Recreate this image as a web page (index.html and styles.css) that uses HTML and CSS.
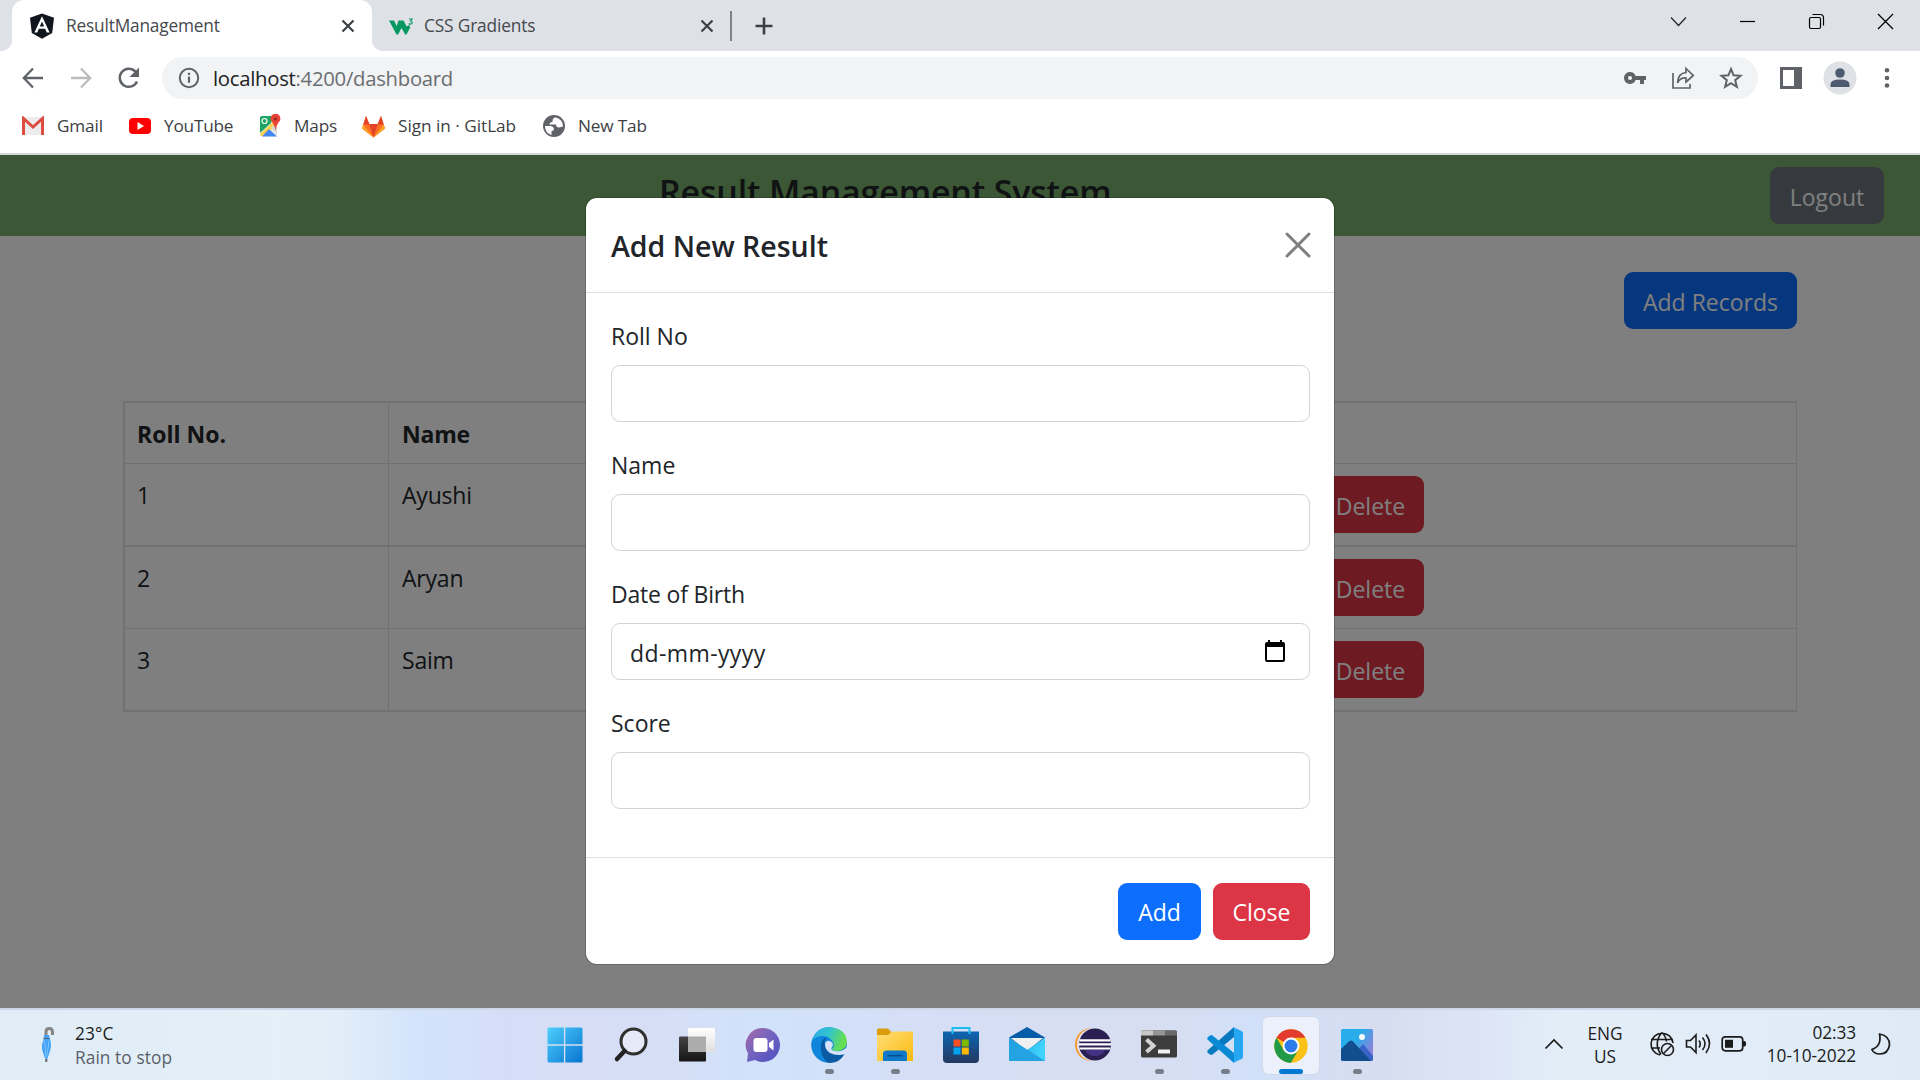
FILE: index.html
```html
<!DOCTYPE html>
<html lang="en">
<head>
<meta charset="utf-8">
<title>ResultManagement</title>
<link rel="stylesheet" href="styles.css">
</head>
<body>
<div class="screen">
  <header class="tabstrip">
    <div class="tab tab-active">
      <svg class="favicon" width="26" height="26" viewBox="0 0 26 26"><path d="M13 0.5 25 4.700 23.200 20 13 25.800 2.800 20 1 4.700Z" fill="#11151d"/><path d="M13 3.200 5.400 19.500h2.900l1.500-3.800h6.400l1.500 3.800h2.900ZM13 8.500l2.200 5h-4.400Z" fill="#fff" fill-rule="evenodd"/></svg>
      <span class="tab-title t-result">ResultManagement</span>
      <svg class="tab-x" width="16" height="16" viewBox="0 0 16 16"><path d="M2.500 2.500l11 11M13.500 2.500l-11 11" stroke="#3c4043" stroke-width="2.200"/></svg>
    </div>
    <div class="tab tab-second">
      <svg width="26" height="26" viewBox="0 0 26 26"><path d="M1 7.500h5l2.700 5.500 1.800-5.500h5l3.200 6 2.500-1.500 1 2.500-3.700 7h-1.300L13.500 15l-3.300 6.500H8.500Z" fill="#059862"/><path d="M21 6h3l-1.500 2q1.800.2 1.700 1.700-.2 1.500-1.700 1.500-1 0-1.700-.7" fill="none" stroke="#059862" stroke-width="1.200"/></svg>
      <span class="tab-title t-css">CSS Gradients</span>
      <svg class="tab-x" width="16" height="16" viewBox="0 0 16 16"><path d="M2.500 2.500l11 11M13.500 2.500l-11 11" stroke="#3c4043" stroke-width="2.200"/></svg>
    </div>
    <div class="tab-sep"></div>
    <svg class="tab-new" width="20" height="20" viewBox="0 0 20 20"><path d="M10 1.500v17M1.500 10h17" stroke="#3c4043" stroke-width="2.600"/></svg>
    <div class="window-controls">
      <svg width="17" height="17" viewBox="0 0 17 17"><path d="M1 4.500l7.500 8 7.500-8" fill="none" stroke="#222" stroke-width="1.200"/></svg>
      <svg width="17" height="17" viewBox="0 0 17 17"><path d="M1 8.500h15" stroke="#000" stroke-width="1.200"/></svg>
      <svg width="17" height="17" viewBox="0 0 17 17"><rect x="1.500" y="4.500" width="11" height="11" rx="1.500" fill="none" stroke="#000" stroke-width="1.200"/><path d="M4.500 1.500h8a3 3 0 0 1 3 3v8" fill="none" stroke="#000" stroke-width="1.200"/></svg>
      <svg width="17" height="17" viewBox="0 0 17 17"><path d="M1 1l15 15M16 1L1 16" stroke="#000" stroke-width="1.300"/></svg>
    </div>
  </header>

  <div class="toolbar">
    <svg class="nav" width="24" height="24" viewBox="0 0 24 24"><path d="M22 12H3M12 2.500L2.800 12l9.200 9.500" fill="none" stroke="#5f6368" stroke-width="2.300"/></svg>
    <svg class="nav" width="24" height="24" viewBox="0 0 24 24"><path d="M2 12h19M12 2.500l9.200 9.500-9.200 9.500" fill="none" stroke="#babcbe" stroke-width="2.300"/></svg>
    <svg class="nav" width="24" height="24" viewBox="0 0 24 24"><path d="M20 15.500A9 9 0 1 1 18.400 5.700L20.500 8" fill="none" stroke="#5f6368" stroke-width="2.500"/><path d="M22 1.500V11h-9.500Z" fill="#5f6368"/></svg>
    <div class="omnibox">
      <svg width="22" height="22" viewBox="0 0 22 22"><circle cx="11" cy="11" r="9.200" fill="none" stroke="#5f6368" stroke-width="2"/><path d="M11 9.500v6.300M11 5.700v2.300" stroke="#5f6368" stroke-width="2.200"/></svg>
      <span class="url"><b>localhost</b>:4200/dashboard</span>
      <span class="omni-icons">
        <svg width="24" height="24" viewBox="0 0 24 24"><path fill-rule="evenodd" d="M7 6a6 6 0 1 0 5.600 8H17v4h4v-4h2v-4H12.600A6 6 0 0 0 7 6Zm0 4a2 2 0 1 1 0 4 2 2 0 0 1 0-4Z" fill="#5f6368"/></svg>
        <svg width="24" height="24" viewBox="0 0 24 24"><path d="M2 7v15h17v-4" fill="none" stroke="#5f6368" stroke-width="1.700"/><path d="M15 2.500l7.300 7-7.300 6.500v-4q-6-.5-8.500 5Q7 7 15 6.500Z" fill="none" stroke="#5f6368" stroke-width="1.700"/></svg>
        <svg width="24" height="24" viewBox="0 0 24 24"><path d="M12 3l2.600 6.300 6.900.5-5.300 4.400 1.700 6.700-5.900-3.700-5.900 3.700 1.700-6.700-5.300-4.400 6.900-.5Z" fill="none" stroke="#5f6368" stroke-width="2"/></svg>
      </span>
    </div>
    <svg class="sidepanel" width="22" height="22" viewBox="0 0 22 22"><path fill-rule="evenodd" d="M0 0h22v22H0ZM3 3v16h11V3Z" fill="#5f6368"/></svg>
    <svg class="avatar" width="34" height="34" viewBox="0 0 34 34"><circle cx="17" cy="17" r="16.500" fill="#dee1e6"/><circle cx="17" cy="12" r="4.800" fill="#4d5a70"/><path d="M7.500 26v-2.500q0-5 9.500-5t9.500 5V26Z" fill="#4d5a70"/></svg>
    <svg class="dots" width="6" height="22" viewBox="0 0 6 22"><g fill="#5f6368"><circle cx="3" cy="3.300" r="2.300"/><circle cx="3" cy="11" r="2.300"/><circle cx="3" cy="18.500" r="2.300"/></g></svg>
  </div>

  <nav class="bookmarks">
    <a class="bm b1"><svg width="24" height="20" viewBox="0 0 24 20"><path d="M1 1h22v18H1Z" fill="#ececec"/><path d="M2.500 19V2.500L12 11l9.500-8.500V19" fill="none" stroke="#dc4c40" stroke-width="3"/></svg><span>Gmail</span></a>
    <a class="bm b2"><svg width="24" height="20" viewBox="0 0 24 20"><rect x="1" y="2" width="22" height="16" rx="4" fill="#f00"/><path d="M9.500 6v8l6.500-4Z" fill="#fff"/></svg><span>YouTube</span></a>
    <a class="bm b3"><svg width="24" height="24" viewBox="0 0 24 24"><path d="M2 2h17v20H2Z" fill="#eee"/><path d="M2 4q0-2 2-2h11l-2 7L2 19Z" fill="#1fa463"/><path d="M2 20L15.500 7.500 18 11 7 22H3Z" fill="#fcd34b"/><path d="M4 22.500L11 15l8 7.500Z" fill="#4285f4"/><path d="M13 13.500l6-4V21Z" fill="#d8d8d8"/><circle cx="6.500" cy="7" r="2.500" fill="none" stroke="#fff" stroke-width="1.200"/><path d="M17.500 16.500q-.5-5-3-8a4.900 4.900 0 1 1 6 0q-2.500 3-3 8Z" fill="#ea4335"/><circle cx="17.500" cy="5" r="1.600" fill="#8e2a20"/></svg><span>Maps</span></a>
    <a class="bm b4"><svg width="25" height="23" viewBox="0 0 25 23"><path d="M12.500 22.500L1 13.500 5 1l3.500 8h8L20 1l4 12.500Z" fill="#fc6d26"/><path d="M12.500 22.500L8.300 9h8.400Z" fill="#e24329"/><path d="M5 1L2.200 9.500h6.200ZM20 1l2.800 8.500h-6.200Z" fill="#e24329"/><path d="M2.200 9.500L1 13.500l11.500 9ZM22.800 9.500l1.200 4-11.500 9Z" fill="#fca326"/></svg><span>Sign in · GitLab</span></a>
    <a class="bm b5"><svg width="24" height="24" viewBox="0 0 24 24"><circle cx="12" cy="12" r="11" fill="#5f6368"/><path d="M3 12h6q3 1 3 3 0 2-2.500 2v4Q3 19 3 12ZM13 3.200Q10 5 10.500 8q-3 0-3 2.500h6.500q0 3 3 3l4-1Q21 5 13 3.200Z" fill="#fff"/></svg><span>New Tab</span></a>
  </nav>

  <main class="page">
    <div class="app-header">
      <h1>Result Management System</h1>
      <button class="btn btn-logout">Logout</button>
    </div>
    <div class="actions"><button class="btn btn-primary btn-records">Add Records</button></div>
    <table class="results">
      <colgroup><col class="c-roll"><col class="c-name"><col class="c-act"></colgroup>
      <tr class="r-head"><th>Roll No.</th><th>Name</th><th></th></tr>
      <tr class="r-thick"><td>1</td><td>Ayushi</td><td><button class="btn btn-danger btn-del">Delete</button></td></tr>
      <tr class="r-thin"><td>2</td><td>Aryan</td><td><button class="btn btn-danger btn-del">Delete</button></td></tr>
      <tr class="r-thick"><td>3</td><td>Saim</td><td><button class="btn btn-danger btn-del">Delete</button></td></tr>
    </table>
    <div class="backdrop"></div>
    <section class="modal">
      <div class="modal-header">
        <h2>Add New Result</h2>
        <svg width="26" height="26" viewBox="0 0 26 26"><path d="M2 2l22 22M24 2L2 24" stroke="#7f7f7f" stroke-width="3" stroke-linecap="round"/></svg>
      </div>
      <form class="modal-body">
        <div class="field"><label>Roll No</label><div class="control"></div></div>
        <div class="field"><label>Name</label><div class="control"></div></div>
        <div class="field"><label class="l-dob">Date of Birth</label><div class="control"><span class="date-hint">dd-mm-yyyy</span><svg width="24" height="24" viewBox="0 0 24 24"><path fill-rule="evenodd" d="M5 1h2v2h10V1h2v2h1q2 0 2 2v16q0 2-2 2H4q-2 0-2-2V5q0-2 2-2h1ZM4 8v13h16V8Z" fill="#000"/></svg></div></div>
        <div class="field"><label>Score</label><div class="control"></div></div>
      </form>
      <div class="modal-footer">
        <button class="btn btn-primary btn-add">Add</button>
        <button class="btn btn-danger btn-close">Close</button>
      </div>
    </section>
  </main>

  <footer class="taskbar">
    <div class="weather">
      <svg width="18" height="36" viewBox="0 0 18 36"><path d="M7 12V5q0-3.500 3.200-3.500T13.500 5v3" fill="none" stroke="#858585" stroke-width="3"/><path d="M5 8h5l1 4q2 6 0 12l-3 9H6.500l-3-9q-1.500-6 1-11Z" fill="#46a4f8"/><path d="M5 13q2 8 2 19M10 14q-1 9-2.500 15" fill="none" stroke="#7cc3ff"/><path d="M4.500 11.500h6" stroke="#596675"/><path d="M7.300 32v3" stroke="#666" stroke-width="2"/></svg>
      <div><p class="temp">23°C</p><p class="rain">Rain to stop</p></div>
    </div>
    <div class="apps">
      <div class="app"><svg width="36" height="36" viewBox="0 0 36 36"><defs><linearGradient id="win" gradientUnits="userSpaceOnUse" x1="0" y1="0" x2="36" y2="36"><stop offset="0" stop-color="#50d0fc"/><stop offset="1" stop-color="#0573d0"/></linearGradient></defs><path d="M2 .5h14.900v16.800H.5V2Q.5.500 2 .5ZM18.300.500H34q1.500 0 1.500 1.500v15.300H18.300ZM.5 18.700h16.400v16.800H2Q.5 35.500.5 34ZM18.300 18.700h17.200V34q0 1.500-1.500 1.500H18.300Z" fill="url(#win)"/></svg></div>
      <div class="app"><svg width="36" height="36" viewBox="0 0 36 36"><circle cx="20.500" cy="14.500" r="12.500" fill="#e6eaf8" stroke="#303030" stroke-width="3"/><path d="M11.500 24L4 32" stroke="#222" stroke-width="4.500" stroke-linecap="round"/></svg></div>
      <div class="app"><svg width="36" height="36" viewBox="0 0 36 36"><defs><linearGradient id="tv" x2="0" y2="1"><stop stop-color="#444"/><stop offset="1" stop-color="#151515"/></linearGradient><linearGradient id="tw" x2="0" y2="1"><stop stop-color="#fff"/><stop offset="1" stop-color="#dedede"/></linearGradient></defs><rect y="9.500" width="27" height="25" rx="1" fill="url(#tv)"/><rect x="9" y="1" width="27" height="24" rx="1" fill="url(#tw)"/><path d="M9 9.500h18V25H9Z" fill="#acacac"/></svg></div>
      <div class="app"><svg width="36" height="36" viewBox="0 0 36 36"><defs><linearGradient id="chat" x1="0" y1="0" x2="1" y2="1"><stop stop-color="#a96aa0"/><stop offset=".45" stop-color="#7565c0"/><stop offset="1" stop-color="#4a4ec0"/></linearGradient></defs><path d="M18 1a17 17 0 1 1-8 32l-8 2 1-8.500A17 17 0 0 1 18 1Z" fill="url(#chat)"/><rect x="8.500" y="11" width="14" height="14" rx="3" fill="#fff"/><path d="M24 16l4.500-3.500v11L24 20Z" fill="#fff"/></svg></div>
      <div class="app running"><svg width="36" height="36" viewBox="0 0 36 36"><defs><linearGradient id="eg" x2="1" y2=".3"><stop stop-color="#2ba9e8"/><stop offset=".5" stop-color="#31c4d0"/><stop offset="1" stop-color="#66df4e"/></linearGradient></defs><circle cx="18" cy="18" r="17.800" fill="#0f86dc"/><path d="M1 14Q5 .2 18 .2q17.800 1 17.900 15.300Q35 23 27 24q-6 0-6-2 3-3 1-7-4-7-12-6-7 1-9 5Z" fill="url(#eg)"/><path d="M10 18q1-7 6-8-5 6 0 12 7 8 17.500 5Q28 37 17 35.700 9 30 10 18Z" fill="#0c59a4"/><path d="M14 17q1-4 5-3 5 2 1.500 7-1 3 6 3.300 5 .2 9.500-4.300l1 5-3.500 2.300Q25 29 19 26q-5-3-5-9Z" fill="#d5e2fa"/></svg></div>
      <div class="app running"><svg width="36" height="36" viewBox="0 0 36 36"><defs><linearGradient id="fd" x2="1" y2="1"><stop stop-color="#ffdf78"/><stop offset="1" stop-color="#fbb90f"/></linearGradient></defs><path d="M0 3q0-1.500 1.500-1.500H11l3.500 3.500V9H0Z" fill="#dc9b08"/><path d="M0 8h11l4-3.500h21V34H0Z" fill="url(#fd)"/><path d="M6 34V27q0-3.500 3.500-3.500h17Q30 23.500 30 27v7Z" fill="#0f78c8"/><path d="M10.500 28.700h15" stroke="#084f91" stroke-width="1.600"/></svg></div>
      <div class="app"><svg width="36" height="36" viewBox="0 0 36 36"><defs><linearGradient id="st" x2="0" y2="1"><stop stop-color="#0d65b2"/><stop offset="1" stop-color="#23395f"/></linearGradient></defs><path d="M0 4.500h36V32q0 4-4 4H4q-4 0-4-4Z" fill="url(#st)"/><path d="M9.500 7V1h17v6" fill="none" stroke="#1bbcf2" stroke-width="2"/><path d="M10.500 12.500h7v7h-7Z" fill="#f25022"/><path d="M18.800 12.500h7v7h-7Z" fill="#7fba00"/><path d="M10.500 20.500h7v7h-7Z" fill="#00a4ef"/><path d="M18.800 20.500h7v7h-7Z" fill="#ffb900"/></svg></div>
      <div class="app"><svg width="36" height="36" viewBox="0 0 36 36"><defs><linearGradient id="ml" x2="1" y2=".3"><stop stop-color="#169bdc"/><stop offset="1" stop-color="#40d4fb"/></linearGradient></defs><path d="M0 10.500L18 0l18 10.500-18 14Z" fill="#075da8"/><path d="M2 11h32L18 24Z" fill="#f0f0f0"/><path d="M0 11l18 12 18-12v23H0Z" fill="url(#ml)"/><path d="M0 11v23h36L18 22.500Z" fill="#24a3e3"/></svg></div>
      <div class="app"><svg width="36" height="36" viewBox="0 0 36 36"><circle cx="16.500" cy="17.500" r="16.500" fill="#f6972b"/><circle cx="18.500" cy="17.500" r="16.500" fill="#dfe3f2"/><circle cx="20" cy="17.500" r="16" fill="#2b1f52"/><path d="M10 23h20q-3 6-10 6t-10-6Z" fill="#443285"/><path d="M4.500 13.300h31M4 17.300h32M4.500 21.500h31" stroke="#fff" stroke-width="2.200"/></svg></div>
      <div class="app running"><svg width="36" height="36" viewBox="0 0 36 36"><rect y="3.500" width="36" height="27" rx="1.500" fill="#3c3c3c"/><path d="M0 8.500V5q0-1.500 1.500-1.500H12v5Z" fill="#c7c7c7"/><path d="M12 3.500h12v5H12Z" fill="#959595"/><path d="M24 3.500h10.500Q36 3.500 36 5v3.500H24Z" fill="#696969"/><path d="M5.500 12.500l7 6.300-7 6.300" fill="none" stroke="#d2d2d2" stroke-width="4"/><rect x="17" y="22.500" width="12" height="4" rx=".5" fill="#f1f1f1"/></svg></div>
      <div class="app running"><svg width="36" height="36" viewBox="0 0 36 36"><path d="M27 0L1 23q-1.500 1.500 0 3l2 1.500q1.200.8 2.500 0L27 10Z" fill="#0879bf"/><path d="M27 36L1 13q-1.500-1.500 0-3l2-1.500q1.200-.8 2.500 0L27 26Z" fill="#0a8ad5"/><path d="M26 0l9 4.200q1 .6 1 2v23.600q0 1.400-1 2L26 36q1-1 1-3V3q0-2-1-3Z" fill="#27a6f2"/></svg></div>
      <div class="app active"><svg width="36" height="36" viewBox="0 0 36 36"><circle cx="18" cy="18" r="16.700" fill="#fbc116"/><path d="M18 18L3.500 9.700A16.700 16.700 0 0 1 32.500 9.700H18Z" fill="#e33b2e"/><path d="M3.500 9.700A16.700 16.700 0 0 0 18 34.700L25.200 22.200 18 18 10.800 22.200Z" fill="#219a48"/><circle cx="18" cy="18" r="8.400" fill="#fff"/><circle cx="18" cy="18" r="6.500" fill="#2c7bea"/></svg></div>
      <div class="app running"><svg width="36" height="36" viewBox="0 0 36 36"><defs><linearGradient id="ph" x2="1" y2=".6"><stop offset=".5" stop-color="#29acea"/><stop offset="1" stop-color="#8b83dc"/></linearGradient></defs><rect x="2" y="2" width="32" height="32" rx="1.500" fill="url(#ph)"/><circle cx="23" cy="10" r="3" fill="#f5fbff"/><path d="M14 30l9-12q1-1 2 0l9 11v3q0 2-2 2H18Z" fill="#3a63c9"/><path d="M2 22l8.500-8q1.500-1.200 3 0L32 34H4q-2 0-2-2Z" fill="#124d8e"/></svg></div>
    </div>
    <div class="tray">
      <svg class="tray-up" width="20" height="12" viewBox="0 0 20 12"><path d="M1.500 10.500L10 2l8.500 8.500" fill="none" stroke="#1b1b1b" stroke-width="1.700"/></svg>
      <div class="lang">ENG<br>US</div>
      <svg class="tray-net" width="26" height="26" viewBox="0 0 26 26"><g fill="none" stroke="#1b1b1b" stroke-width="1.600"><path d="M24 12A11 11 0 1 0 11 24M2 8.500h21M2 17h9M13 1.500q-9 10.500-1 22M13 1.500q4 4 4.500 9"/><circle cx="18.500" cy="18.500" r="6"/><path d="M14.500 22.500l8-8"/></g></svg>
      <svg class="tray-vol" width="26" height="22" viewBox="0 0 26 22"><g fill="none" stroke="#1b1b1b" stroke-width="1.600"><path d="M1.500 7.500h4L11 2v17.500L5.500 14h-4Z"/><path d="M14 7.500q2.500 3.500 0 7M17.500 4.500q5 6 0 12.500M21 1.500q7 9 0 18.500"/></g></svg>
      <svg class="tray-bat" width="26" height="18" viewBox="0 0 26 18"><rect x="1.200" y="1.800" width="20.500" height="14" rx="3" fill="none" stroke="#1b1b1b" stroke-width="1.700"/><rect x="4" y="4.800" width="8" height="8" fill="#1b1b1b"/><path d="M22 6h1.500l1.500 1v3.500l-1.500 1H22Z" fill="#1b1b1b"/></svg>
      <div class="clock">02:33<br>10-10-2022</div>
      <svg class="tray-moon" width="22" height="24" viewBox="0 0 22 24"><path d="M9.500 2Q20 4 19.500 13 18 22 10 22 4 22 1.800 17.500 12 14 9.500 2Z" fill="none" stroke="#1b1b1b" stroke-width="1.700" stroke-linejoin="round"/></svg>
    </div>
  </footer>
</div>
</body>
</html>
```
FILE: styles.css
```css
* { box-sizing: border-box; }
body { margin: 0; font-family: "Open Sans", "Noto Sans", sans-serif; color: #212529; background: #fff; }
svg { display: block; flex: none; }
h1, h2, p { margin: 0; }
.screen { width: 1920px; height: 1080px; display: flex; flex-direction: column; overflow: hidden; }

/* Tab strip */
.tabstrip { height: 51px; flex: none; background: #dee1e6; display: flex; align-items: center; padding-left: 12px; }
.tab { display: flex; align-items: center; height: 51px; color: #45494d; font-size: 17.300px; white-space: nowrap; }
.tab-active { width: 360px; background: #fff; border-radius: 12px 12px 0 0; padding: 0 16px 0 17px; position: relative; }
.tab-active::before, .tab-active::after { content: ""; position: absolute; bottom: 0; width: 12px; height: 12px; }
.tab-active::before { left: -12px; background: radial-gradient(circle at 0 0, transparent 12px, #fff 12.500px); }
.tab-active::after { right: -12px; background: radial-gradient(circle at 100% 0, transparent 12px, #fff 12.500px); }
.tab-second { width: 358px; padding: 0 15px 0 16px; }
.tab-title { margin-left: 11px; }
.t-result { letter-spacing: -0.180px; }
.t-css { margin-left: 10px; letter-spacing: -0.150px; }
.tab-x { margin-left: auto; }
.tab-sep { width: 1.500px; height: 30px; background: #808387; }
.tab-new { margin-left: 22px; }
.window-controls { margin-left: auto; margin-right: 26px; margin-bottom: 8px; display: flex; gap: 52px; }

/* Toolbar */
.toolbar { height: 54px; flex: none; display: flex; align-items: center; padding-left: 21px; }
.nav { margin-right: 24px; }
.omnibox { width: 1596px; height: 42px; border-radius: 21px; background: #f1f3f4; display: flex; align-items: center; padding: 0 15px 0 16px; margin-left: -3px; }
.url { margin-left: 13px; font-size: 20.300px; color: #6a6e72; letter-spacing: -0.270px; }
.url b { font-weight: 400; color: #202124; }
.omni-icons { display: flex; gap: 24px; margin-left: auto; }
.sidepanel { margin-left: 22px; }
.avatar { margin-left: 21px; }
.dots { margin-left: 27px; }

/* Bookmarks */
.bookmarks { height: 50px; flex: none; border-bottom: 2px solid #d6d8da; padding: 0 21px 6px; display: flex; align-items: center; font-size: 17.200px; letter-spacing: -0.150px; color: #3c4043; white-space: nowrap; }
.bm { display: flex; align-items: center; gap: 12px; }
.bm span { margin-top: -2px; }
.b1 { width: 107px; }
.b2 { width: 130px; letter-spacing: -0.200px; }
.b3 { width: 103px; }
.b4 { width: 181px; letter-spacing: -0.020px; }

/* Page */
.page { height: 853px; flex: none; position: relative; background: #fff; font-size: 23px; line-height: 36px; }
.app-header { height: 81px; background: #76ae6a; display: flex; align-items: center; padding: 0 36px 0 659px; }
.app-header h1 { font-size: 34px; font-weight: 600; letter-spacing: -0.180px; line-height: 48px; color: #212529; margin-top: -8px; white-space: nowrap; }
.btn { font: inherit; height: 57px; border: 0; border-radius: 9px; color: #fff; text-align: center; padding: 3px 0 0; display: block; white-space: nowrap; }
.btn-primary { background: #0d6efd; }
.btn-danger { background: #dc3545; }
.btn-logout { background: #6c757d; width: 114px; margin-left: auto; }
.actions { padding: 36px 123px 0 0; display: flex; justify-content: flex-end; }
.btn-records { width: 173px; }
.results { table-layout: fixed; width: 1674px; margin: 72px 0 0 123px; border-collapse: separate; border-spacing: 0; border-top: 2px solid #dee2e6; border-left: 2px solid #dee2e6; }
.c-roll { width: 264px; }
.c-name { width: 916px; }
.results th, .results td { padding: 13px 12px 0; text-align: left; vertical-align: top; border-right: 1px solid #dee2e6; border-bottom: 1px solid #dee2e6; }
.results .r-head th { height: 61px; }
.results .r-thick td { height: 83px; border-bottom-width: 2px; }
.results .r-thin td { height: 82px; }
.results th:nth-child(2), .results td:nth-child(2) { border-right: 0; padding-left: 13px; letter-spacing: -0.200px; }
.results td:last-child { padding-top: 12px; }
.btn-del { width: 107px; }
.backdrop { position: absolute; inset: 0; background: rgba(0, 0, 0, 0.5); }

/* Modal */
.modal { position: absolute; left: 586px; top: 43px; width: 748px; height: 766px; background: #fff; box-shadow: 0 0 0 1px rgba(0, 0, 0, 0.175); border-radius: 11px; }
.modal-header { height: 95px; border-bottom: 1px solid #dee2e6; display: flex; align-items: center; justify-content: space-between; padding: 0 23px 0 25px; }
.modal-header svg { margin-top: -1px; }
.modal-header h2 { font-size: 28.500px; font-weight: 600; letter-spacing: 0; line-height: 45px; margin-top: 3px; }
.modal-body { padding: 24px 24px 24px 25px; height: 564px; display: flex; flex-direction: column; gap: 24px; }
.field { display: flex; flex-direction: column; gap: 12px; }
.field label { height: 36px; padding-top: 1px; }
.l-dob { letter-spacing: -0.200px; }
.date-hint { letter-spacing: 0.400px; }
.control { height: 57px; border: 1px solid #ced4da; border-radius: 9px; display: flex; align-items: center; justify-content: space-between; padding: 2px 22px 0 18px; }
.control svg { margin-top: -3px; }
.modal-footer { border-top: 1px solid #dee2e6; padding: 25px 24px 24px; display: flex; justify-content: flex-end; gap: 12px; }
.modal-footer .btn { padding-top: 1px; }
.btn-add { width: 83px; }
.btn-close { width: 97px; }

/* Taskbar */
.taskbar { height: 72px; flex: none; border-top: 2px solid #ccd7e8; display: flex; color: #1b1b1b; font-size: 17.300px; background: linear-gradient(90deg, #e0edf6 0, #e4eff8 280px, #e1edf8 340px, #d3e3fb 420px, #d6ddf6 520px, #d6def5 650px, #d1e2fa 760px, #d6def5 960px, #d7def2 1160px, #d1e0f8 1260px, #d7ddf0 1380px, #dde5f5 1480px, #e3edf8 1560px, #deebf7 1920px); }
.weather { width: 532px; display: flex; padding: 17px 0 0 39px; gap: 18px; line-height: 24px; letter-spacing: 0.080px; }
.weather > div { margin-top: -5px; }
.rain { color: #5b6168; }
.apps { display: flex; flex: none; }
.app { width: 66px; height: 70px; display: flex; flex-direction: column; align-items: center; padding-top: 17px; }
.running::after { content: ""; width: 9px; height: 5px; border-radius: 3px; background: #777d89; margin-top: 6px; }
.active { width: 56px; height: 57px; margin: 7px 5px 0; padding-top: 11px; background: #ebf0fb; border-radius: 6px; box-shadow: 0 0 0 1px #d2d9ea; }
.active::after { content: ""; width: 24px; height: 5px; border-radius: 3px; background: #0078d4; margin-top: 5px; }
.tray { display: flex; flex: 1; align-items: flex-start; line-height: 23px; }
.tray-up { margin: 28px 0 0 154px; }
.lang { width: 60px; margin: 12px 0 0 11px; text-align: center; }
.tray-net { margin: 21px 0 0 14px; }
.tray-vol { margin: 23px 0 0 10px; }
.tray-bat { margin: 25px 0 0 10px; }
.clock { width: 110px; margin: 11px 0 0 -1px; text-align: right; letter-spacing: -0.100px; }
.tray-moon { margin: 22px 0 0 14px; }
```
